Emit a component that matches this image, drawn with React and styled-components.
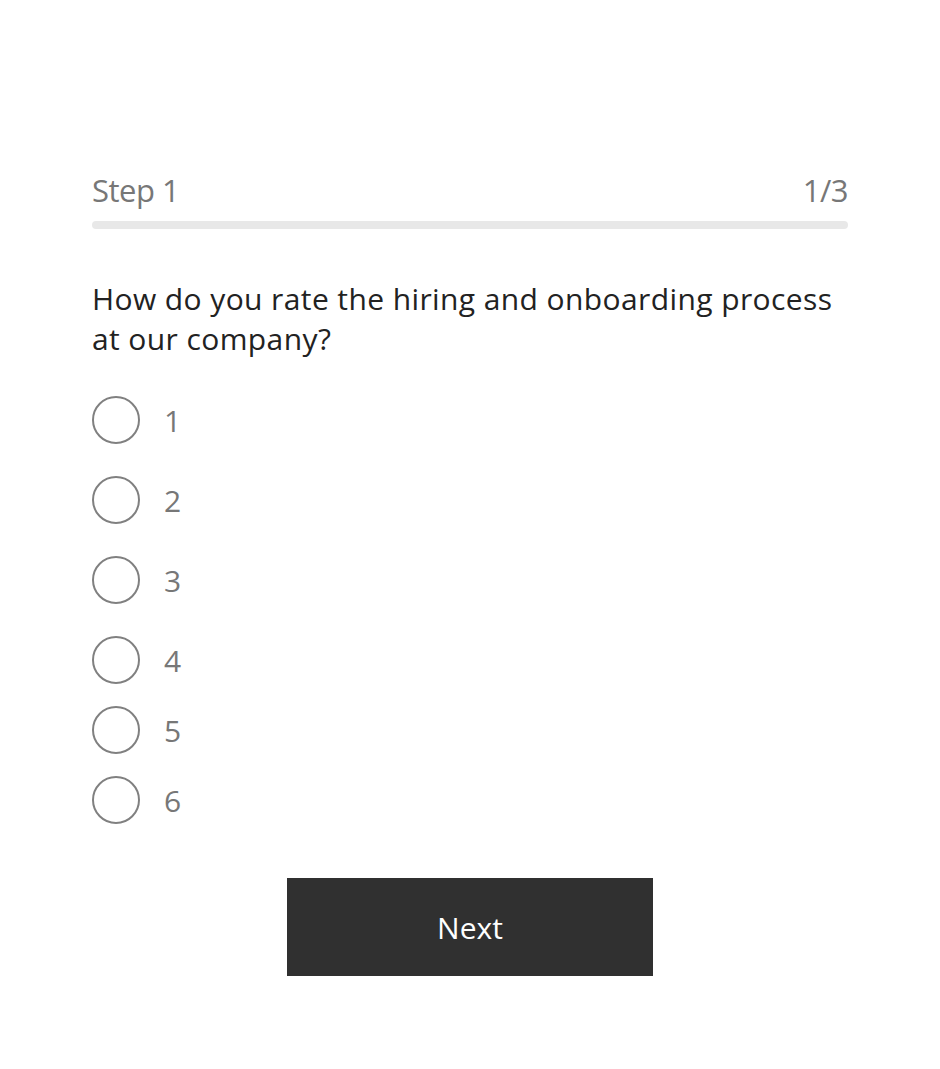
import React, { Component } from 'react'
import styled, { createGlobalStyle } from 'styled-components'

const options = [
    { value: 1, space: 0 },
    { value: 2, space: 32 },
    { value: 3, space: 32 },
    { value: 4, space: 32 },
    { value: 5, space: 22 },
    { value: 6, space: 22 }
]

class App extends Component {
    constructor(props) {
        super(props)
        this.state = {
            selected: null
        }
    }

    render() {
        return (
            <Page>
                <GlobalStyle/>
                <Header>
                    <StepText>Step 1</StepText>
                    <StepText>1/3</StepText>
                </Header>
                <Track/>
                <Question>How do you rate the hiring and onboarding process at our company?</Question>
                <OptionList>
                    {options.map(o => (
                        <Option key={o.value} space={o.space} onClick={() => this.setState({selected: o.value})}>
                            <Radio checked={this.state.selected === o.value}/>
                            <Label>{o.value}</Label>
                        </Option>
                    ))}
                </OptionList>
                <NextButton>Next</NextButton>
            </Page>
        )
    }
}

const GlobalStyle = createGlobalStyle`
    body {
        margin: 0;
        background: #fff;
        font-family: "Open Sans", "Noto Sans", sans-serif;
    }
`

const Page = styled.div`
    width: 756px;
    margin: 0 auto;
    padding-top: 168px;
    display: flex;
    flex-direction: column;
`

const Header = styled.div`
    display: flex;
    justify-content: space-between;
    align-items: baseline;
`

const StepText = styled.span`
    font-size: 31px;
    line-height: 44px;
    color: #777;
    letter-spacing: -0.5px;
`

const Track = styled.div`
    height: 8px;
    margin-top: 9px;
    border-radius: 4px;
    background: #e8e8e8;
`

const Question = styled.div`
    margin-top: 50px;
    font-size: 30px;
    line-height: 40px;
    color: #222;
    letter-spacing: 0.4px;
`

const OptionList = styled.div`
    margin-top: 37px;
    display: flex;
    flex-direction: column;
`

const Option = styled.label`
    display: flex;
    align-items: center;
    gap: 24px;
    height: 48px;
    margin-top: ${props => props.space}px;
    cursor: pointer;
`

const Radio = styled.span`
    box-sizing: border-box;
    width: 48px;
    height: 48px;
    border-radius: 50%;
    border: 2px solid #808080;
    background: ${props => props.checked ? 'radial-gradient(circle, #333 0 10px, #fff 11px)' : '#fff'};
`

const Label = styled.span`
    font-size: 30px;
    color: #777;
`

const NextButton = styled.button`
    align-self: center;
    margin-top: 54px;
    width: 366px;
    height: 98px;
    border: none;
    background: #303030;
    color: #fff;
    font-family: inherit;
    font-size: 30px;
    cursor: pointer;
`

export default App
